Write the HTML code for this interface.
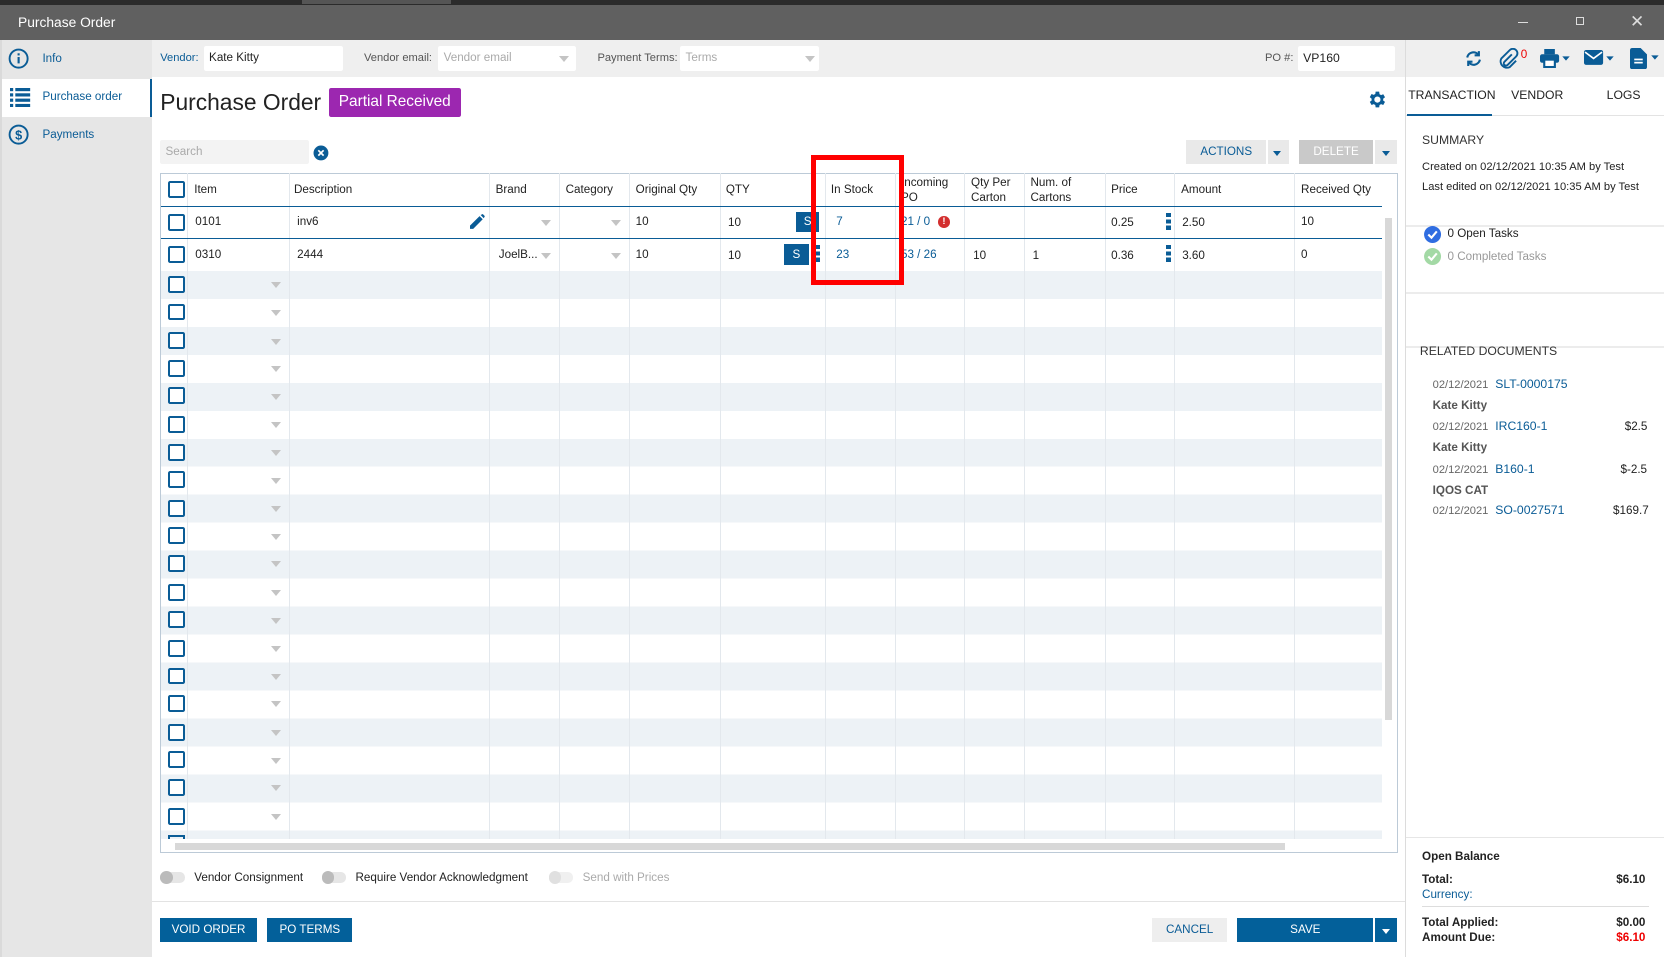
<!DOCTYPE html>
<html><head><meta charset="utf-8"><style>
*{box-sizing:border-box;margin:0;padding:0}
html,body{width:1664px;height:957px;overflow:hidden;background:#fff}
#z{zoom:1.06122;width:1568px;height:902px;position:relative;font-family:"Liberation Sans",sans-serif;font-size:11px;color:#222}
.a{position:absolute}
.t{position:absolute;white-space:nowrap}
.blue{color:#0a5c96}
.inp{position:absolute;background:#fff;height:24px;border-radius:2px;padding:5px 5px;font-size:11px}
.cb{position:absolute;left:158px;width:16px;height:16px;border:2px solid #0a5c96;border-radius:2px;background:#fff}
.dd{position:absolute;width:0;height:0;border-left:5px solid transparent;border-right:5px solid transparent;border-top:6px solid #c4c4c4}
.btn{position:absolute;background:#03609a;color:#fff;text-align:center;font-size:11px;line-height:23px;height:23px}
.vl{position:absolute;top:163px;height:628px;width:1px;background:#e3e8ed}
</style></head><body><div id="z">
<div class="a" style="left:0;top:0;width:1568px;height:5px;background:#2b2b2b"></div>
<div class="a" style="left:285px;top:0;width:140px;height:4px;background:#555"></div>
<div class="a" style="left:0;top:5px;width:1568px;height:33px;background:#606060"></div>
<div class="t" style="left:17px;top:14px;color:#fff;font-size:13px">Purchase Order</div>
<div class="a" style="left:1430px;top:21px;width:10px;height:1px;background:#ddd"></div>
<div class="a" style="left:1485px;top:16px;width:8px;height:8px;border:1px solid #ddd"></div>
<div class="t" style="left:1536px;top:11px;color:#ddd;font-size:16px">✕</div>
<div class="a" style="left:0;top:38px;width:143px;height:864px;background:#e6e6e6"></div>
<div class="a" style="left:0;top:38px;width:2px;height:864px;background:#dadada"></div>
<div class="a" style="left:2px;top:74px;width:141px;height:36px;background:#fff;border-right:2px solid #0a5c96"></div>
<svg class="a" style="left:8px;top:45px" width="20" height="20"><circle cx="10" cy="10" r="8.5" fill="none" stroke="#0a5c96" stroke-width="1.8"/><rect x="9" y="8.5" width="2" height="6" fill="#0a5c96"/><rect x="9" y="5" width="2" height="2" fill="#0a5c96"/></svg>
<div class="t blue" style="left:40px;top:49px">Info</div>
<svg class="a" style="left:9px;top:83px" width="20" height="18" fill="#0a5c96"><rect x="0" y="0" width="3" height="3"/><rect x="5" y="0" width="14" height="3"/><rect x="0" y="5" width="3" height="3"/><rect x="5" y="5" width="14" height="3"/><rect x="0" y="10" width="3" height="3"/><rect x="5" y="10" width="14" height="3"/><rect x="0" y="15" width="3" height="3"/><rect x="5" y="15" width="14" height="3"/></svg>
<div class="t blue" style="left:40px;top:85px">Purchase order</div>
<svg class="a" style="left:8px;top:117px" width="20" height="20"><circle cx="10" cy="10" r="8.5" fill="none" stroke="#0a5c96" stroke-width="1.8"/><text x="10" y="14.5" text-anchor="middle" font-size="12" font-weight="bold" fill="#0a5c96" font-family="Liberation Sans">$</text></svg>
<div class="t blue" style="left:40px;top:121px">Payments</div>
<div class="a" style="left:143px;top:38px;width:1425px;height:35px;background:#efefef"></div>
<div class="a" style="left:1324px;top:38px;width:1px;height:864px;background:#dcdcdc"></div>
<div class="t blue" style="left:151px;top:49px;font-size:10.5px">Vendor:</div>
<div class="inp" style="left:192px;top:43px;width:131px">Kate Kitty</div>
<div class="t" style="left:343px;top:49px;font-size:10.5px;color:#555">Vendor email:</div>
<div class="inp" style="left:413px;top:43px;width:130px;color:#aaa">Vendor email</div>
<div class="dd" style="left:527px;top:53px"></div>
<div class="t" style="left:563px;top:49px;font-size:10.5px;color:#555">Payment Terms:</div>
<div class="inp" style="left:641px;top:43px;width:131px;color:#aaa">Terms</div>
<div class="dd" style="left:759px;top:53px"></div>
<div class="t" style="left:1192px;top:49px;font-size:10.5px;color:#555">PO #:</div>
<div class="inp" style="left:1223px;top:43px;width:92px;font-size:11.5px">VP160</div>
<svg class="a" style="left:1380px;top:46px" width="18" height="18" fill="none" stroke="#0a5c96" stroke-width="2"><path d="M3 8a6 6 0 0 1 11-2"/><path d="M15 10a6 6 0 0 1-11 2"/><path d="M14 2v4h-4" /><path d="M4 16v-4h4"/></svg>
<svg class="a" style="left:1411px;top:45px" width="20" height="20" fill="none" stroke="#0a5c96" stroke-width="1.8"><path d="M14 6l-7 7a2 2 0 0 0 3 3l8-8a4 4 0 0 0-6-6l-8 8a6 6 0 0 0 8 8l6-6"/></svg>
<div class="t" style="left:1433px;top:45px;color:#e00;font-size:11px">0</div>
<svg class="a" style="left:1451px;top:46px" width="30" height="18" fill="#0a5c96"><rect x="4" y="0" width="10" height="5"/><rect x="0" y="5" width="18" height="8" rx="2"/><rect x="4" y="10" width="10" height="7" fill="#fff" stroke="#0a5c96" stroke-width="2"/><path d="M21 7h7l-3.5 4z"/></svg>
<svg class="a" style="left:1493px;top:47px" width="30" height="16" fill="#0a5c96"><rect x="0" y="0" width="18" height="14" rx="2"/><path d="M1 2l8 6 8-6" stroke="#fff" stroke-width="1.6" fill="none"/><path d="M21 6h7l-3.5 4z"/></svg>
<svg class="a" style="left:1536px;top:45px" width="30" height="20" fill="#0a5c96"><path d="M0 2a2 2 0 0 1 2-2h8l6 6v12a2 2 0 0 1-2 2H2a2 2 0 0 1-2-2z"/><rect x="4" y="10" width="8" height="1.6" fill="#fff"/><rect x="4" y="13" width="8" height="1.6" fill="#fff"/><path d="M20 7h7l-3.5 4z"/></svg>
<div class="t" style="left:1327px;top:83px;font-size:11.5px">TRANSACTION</div>
<div class="t" style="left:1424px;top:83px;font-size:11.5px">VENDOR</div>
<div class="t" style="left:1514px;top:83px;font-size:11.5px">LOGS</div>
<div class="a" style="left:1325px;top:108px;width:243px;height:1px;background:#e3e3e3"></div>
<div class="a" style="left:1326px;top:107px;width:80px;height:2px;background:#0a5c96"></div>
<div class="t" style="left:1340px;top:125px;font-size:11.5px;color:#333">SUMMARY</div>
<div class="t" style="left:1340px;top:152px;font-size:10.5px">Created on 02/12/2021 10:35 AM by Test</div>
<div class="t" style="left:1340px;top:171px;font-size:10.5px">Last edited on 02/12/2021 10:35 AM by Test</div>
<div class="a" style="left:1325px;top:212px;width:243px;height:2px;background:#ececec"></div>
<svg class="a" style="left:1341px;top:212px" width="18" height="18"><circle cx="9" cy="9" r="8" fill="#2f6de1"/><path d="M5 9l3 3 5-6" stroke="#fff" stroke-width="2" fill="none"/></svg>
<div class="t" style="left:1364px;top:214px;font-size:11px">0 Open Tasks</div>
<svg class="a" style="left:1341px;top:233px" width="18" height="18"><circle cx="9" cy="9" r="8" fill="#a3d9a5"/><path d="M5 9l3 3 5-6" stroke="#fff" stroke-width="2" fill="none"/></svg>
<div class="t" style="left:1364px;top:236px;font-size:11px;color:#999">0 Completed Tasks</div>
<div class="a" style="left:1325px;top:275px;width:243px;height:2px;background:#ececec"></div>
<div class="a" style="left:1325px;top:326px;width:243px;height:2px;background:#ececec"></div>
<div class="t" style="left:1338px;top:324px;font-size:11.5px;color:#333">RELATED DOCUMENTS</div>
<div class="t" style="left:1350px;top:357px;font-size:10.5px;color:#666">02/12/2021</div><div class="t blue" style="left:1409px;top:355px;font-size:11.5px">SLT-0000175</div>
<div class="t" style="left:1350px;top:376px;font-weight:bold;color:#555">Kate Kitty</div>
<div class="t" style="left:1350px;top:397px;font-size:10.5px;color:#666">02/12/2021</div><div class="t blue" style="left:1409px;top:395px;font-size:11.5px">IRC160-1</div><div class="t" style="left:1531px;top:396px">$2.5</div>
<div class="t" style="left:1350px;top:416px;font-weight:bold;color:#555">Kate Kitty</div>
<div class="t" style="left:1350px;top:437px;font-size:10.5px;color:#666">02/12/2021</div><div class="t blue" style="left:1409px;top:435px;font-size:11.5px">B160-1</div><div class="t" style="left:1527px;top:436px">$-2.5</div>
<div class="t" style="left:1350px;top:456px;font-weight:bold;color:#555">IQOS CAT</div>
<div class="t" style="left:1350px;top:476px;font-size:10.5px;color:#666">02/12/2021</div><div class="t blue" style="left:1409px;top:474px;font-size:11.5px">SO-0027571</div><div class="t" style="left:1520px;top:475px">$169.7</div>
<div class="a" style="left:1325px;top:789px;width:243px;height:1px;background:#e6e6e6"></div>
<div class="t" style="left:1340px;top:801px;font-weight:bold;font-size:11px">Open Balance</div>
<div class="t" style="left:1340px;top:823px;font-weight:bold">Total:</div><div class="t" style="left:1523px;top:823px;font-weight:bold">$6.10</div>
<div class="t blue" style="left:1340px;top:837px">Currency:</div>
<div class="a" style="left:1340px;top:854px;width:214px;height:1px;background:#ddd"></div>
<div class="t" style="left:1340px;top:863px;font-weight:bold">Total Applied:</div><div class="t" style="left:1523px;top:863px;font-weight:bold">$0.00</div>
<div class="t" style="left:1340px;top:877px;font-weight:bold">Amount Due:</div><div class="t" style="left:1523px;top:877px;font-weight:bold;color:#e00">$6.10</div>
<div class="t" style="left:151px;top:84px;font-size:21.5px;color:#222">Purchase Order</div>
<div class="a" style="left:310px;top:83px;width:124px;height:27px;background:#9c27b0;border-radius:2px;color:#fff;font-size:14.5px;line-height:27px;text-align:center">Partial Received</div>
<svg class="a" style="left:1287px;top:84px" width="20" height="20" viewBox="0 0 24 24" fill="#0a5c96"><path d="M19.4 13a7.5 7.5 0 0 0 0-2l2.1-1.6-2-3.5-2.5 1a7.6 7.6 0 0 0-1.7-1L14.9 3h-4l-.4 2.7a7.6 7.6 0 0 0-1.7 1l-2.5-1-2 3.5L6.4 11a7.5 7.5 0 0 0 0 2l-2.1 1.6 2 3.5 2.5-1a7.6 7.6 0 0 0 1.7 1l.4 2.7h4l.4-2.7a7.6 7.6 0 0 0 1.7-1l2.5 1 2-3.5zM12.9 15.5a3.5 3.5 0 1 1 0-7 3.5 3.5 0 0 1 0 7z"/></svg>
<div class="a" style="left:151px;top:132px;width:140px;height:23px;background:#f3f3f3;border-radius:2px;color:#aaa;padding:5px;font-size:11px">Search</div>
<svg class="a" style="left:295px;top:137px" width="15" height="15"><circle cx="7.5" cy="7.5" r="7" fill="#0a5c96"/><path d="M5 5l5 5M10 5l-5 5" stroke="#fff" stroke-width="1.6"/></svg>
<div class="a" style="left:1118px;top:132px;width:75px;height:23px;background:#e9e9e9;color:#0a5c96;text-align:center;line-height:23px">ACTIONS</div>
<div class="a" style="left:1195px;top:132px;width:20px;height:23px;background:#e9e9e9"></div><div class="dd" style="left:1200px;top:142px;border-top-color:#0a5c96;border-width:5px 4px 0 4px"></div>
<div class="a" style="left:1224px;top:132px;width:70px;height:23px;background:#c9c9c9;color:#fff;text-align:center;line-height:23px">DELETE</div>
<div class="a" style="left:1296px;top:132px;width:20px;height:23px;background:#e9e9e9"></div><div class="dd" style="left:1302px;top:142px;border-top-color:#0a5c96;border-width:5px 4px 0 4px"></div>
<div class="a" style="left:151px;top:163px;width:1166px;height:641px;border:1px solid #bccad7;background:#fff"></div>
<div class="a" style="left:152px;top:255px;width:1150px;height:536px;background:repeating-linear-gradient(#edf2f6 0 26.35px,#fff 26.35px 52.7px)"></div>
<div class="vl" style="left:176px"></div><div class="vl" style="left:272px"></div><div class="vl" style="left:461px"></div><div class="vl" style="left:527px"></div><div class="vl" style="left:593px"></div><div class="vl" style="left:678px"></div><div class="vl" style="left:777px"></div><div class="vl" style="left:843px"></div><div class="vl" style="left:908px"></div><div class="vl" style="left:965px"></div><div class="vl" style="left:1041px"></div><div class="vl" style="left:1106px"></div><div class="vl" style="left:1219px"></div>
<div class="a" style="left:152px;top:194px;width:1150px;height:1px;background:#0a5c96"></div>
<div class="a" style="left:152px;top:224px;width:1150px;height:1px;background:#0a5c96"></div>
<div class="a" style="left:1302px;top:164px;width:14px;height:626px;background:#fff"></div>
<div class="a" style="left:1305px;top:205px;width:7px;height:473px;background:#d8d8d8"></div>
<div class="a" style="left:165px;top:794px;width:1046px;height:7px;background:#d8d8d8"></div>
<div class="cb" style="top:171px"></div>
<div class="t" style="left:183px;top:172px">Item</div><div class="t" style="left:277px;top:172px">Description</div><div class="t" style="left:467px;top:172px">Brand</div><div class="t" style="left:533px;top:172px">Category</div><div class="t" style="left:599px;top:172px">Original Qty</div><div class="t" style="left:684px;top:172px">QTY</div><div class="t" style="left:783px;top:172px">In Stock</div><div class="t" style="left:849px;top:166px;line-height:14px">Incoming<br>PO</div><div class="t" style="left:915px;top:166px;line-height:14px">Qty Per<br>Carton</div><div class="t" style="left:971px;top:166px;line-height:14px">Num. of<br>Cartons</div><div class="t" style="left:1047px;top:172px">Price</div><div class="t" style="left:1113px;top:172px">Amount</div><div class="t" style="left:1226px;top:172px">Received Qty</div>
<div class="cb" style="top:202px"></div>
<div class="t" style="left:184px;top:203px">0101</div><div class="t" style="left:280px;top:203px">inv6</div>
<svg class="a" style="left:443px;top:202px" width="14" height="14" fill="#0a5c96"><path d="M0 14v-3l9-9 3 3-9 9zM10 1l2-1 2 2-1 2z"/></svg>
<div class="dd" style="left:510px;top:207px"></div><div class="dd" style="left:576px;top:207px"></div>
<div class="t" style="left:599px;top:203px">10</div><div class="t" style="left:686px;top:204px">10</div>
<div class="a" style="left:750px;top:200px;width:22px;height:19px;background:#0a5c96;color:#fff;text-align:center;line-height:19px">S</div>
<div class="t blue" style="left:788px;top:203px">7</div><div class="t blue" style="left:849px;top:203px">21 / 0</div>
<div class="a" style="left:884px;top:204px;width:11px;height:11px;border-radius:50%;background:#d32f2f;color:#fff;font-size:9px;font-weight:bold;text-align:center;line-height:11px">!</div>
<div class="t" style="left:1047px;top:204px">0.25</div><div class="t" style="left:1114px;top:204px">2.50</div><div class="t" style="left:1226px;top:203px">10</div>
<div class="a" style="left:1099px;top:201px;width:4px;height:16px;background:repeating-linear-gradient(#0a5c96 0 4px,transparent 4px 6px)"></div>
<div class="cb" style="top:232px"></div>
<div class="t" style="left:184px;top:234px">0310</div><div class="t" style="left:280px;top:234px">2444</div><div class="t" style="left:470px;top:234px">JoelB...</div>
<div class="dd" style="left:510px;top:238px"></div><div class="dd" style="left:576px;top:238px"></div>
<div class="t" style="left:599px;top:234px">10</div><div class="t" style="left:686px;top:235px">10</div>
<div class="a" style="left:739px;top:230px;width:23px;height:20px;background:#0a5c96;color:#fff;text-align:center;line-height:20px">S</div>
<div class="a" style="left:769px;top:231px;width:4px;height:16px;background:repeating-linear-gradient(#0a5c96 0 4px,transparent 4px 6px)"></div>
<div class="t blue" style="left:788px;top:234px">23</div><div class="t blue" style="left:849px;top:234px">53 / 26</div><div class="t" style="left:917px;top:235px">10</div><div class="t" style="left:973px;top:235px">1</div>
<div class="t" style="left:1047px;top:235px">0.36</div><div class="t" style="left:1114px;top:235px">3.60</div><div class="t" style="left:1226px;top:234px">0</div>
<div class="a" style="left:1099px;top:231px;width:4px;height:16px;background:repeating-linear-gradient(#0a5c96 0 4px,transparent 4px 6px)"></div>
<div class="cb" style="top:260px"></div><div class="dd" style="left:255px;top:266px"></div>
<div class="cb" style="top:286px"></div><div class="dd" style="left:255px;top:292px"></div>
<div class="cb" style="top:313px"></div><div class="dd" style="left:255px;top:319px"></div>
<div class="cb" style="top:339px"></div><div class="dd" style="left:255px;top:345px"></div>
<div class="cb" style="top:365px"></div><div class="dd" style="left:255px;top:371px"></div>
<div class="cb" style="top:392px"></div><div class="dd" style="left:255px;top:398px"></div>
<div class="cb" style="top:418px"></div><div class="dd" style="left:255px;top:424px"></div>
<div class="cb" style="top:444px"></div><div class="dd" style="left:255px;top:450px"></div>
<div class="cb" style="top:471px"></div><div class="dd" style="left:255px;top:477px"></div>
<div class="cb" style="top:497px"></div><div class="dd" style="left:255px;top:503px"></div>
<div class="cb" style="top:523px"></div><div class="dd" style="left:255px;top:529px"></div>
<div class="cb" style="top:550px"></div><div class="dd" style="left:255px;top:556px"></div>
<div class="cb" style="top:576px"></div><div class="dd" style="left:255px;top:582px"></div>
<div class="cb" style="top:603px"></div><div class="dd" style="left:255px;top:609px"></div>
<div class="cb" style="top:629px"></div><div class="dd" style="left:255px;top:635px"></div>
<div class="cb" style="top:655px"></div><div class="dd" style="left:255px;top:661px"></div>
<div class="cb" style="top:682px"></div><div class="dd" style="left:255px;top:688px"></div>
<div class="cb" style="top:708px"></div><div class="dd" style="left:255px;top:714px"></div>
<div class="cb" style="top:734px"></div><div class="dd" style="left:255px;top:740px"></div>
<div class="cb" style="top:761px"></div><div class="dd" style="left:255px;top:767px"></div>
<div class="a" style="left:158px;top:787px;width:16px;height:4px;border:2px solid #0a5c96;border-bottom:0"></div>
<div class="a" style="left:764px;top:146px;width:88px;height:123px;border:5px solid #f00"></div>
<div class="a" style="left:151px;top:822px;width:23px;height:10px;border-radius:5px;background:#e6e6e6"></div><div class="a" style="left:151px;top:821px;width:12px;height:12px;border-radius:50%;background:#bbb"></div>
<div class="t" style="left:183px;top:821px">Vendor Consignment</div>
<div class="a" style="left:303px;top:822px;width:23px;height:10px;border-radius:5px;background:#e6e6e6"></div><div class="a" style="left:303px;top:821px;width:12px;height:12px;border-radius:50%;background:#bbb"></div>
<div class="t" style="left:335px;top:821px">Require Vendor Acknowledgment</div>
<div class="a" style="left:517px;top:822px;width:23px;height:10px;border-radius:5px;background:#f0f0f0"></div><div class="a" style="left:517px;top:821px;width:12px;height:12px;border-radius:50%;background:#e0e0e0"></div>
<div class="t" style="left:549px;top:821px;color:#aaa">Send with Prices</div>
<div class="a" style="left:143px;top:849px;width:1181px;height:1px;background:#e3e3e3"></div>
<div class="btn" style="left:151px;top:865px;width:91px">VOID ORDER</div>
<div class="btn" style="left:252px;top:865px;width:80px">PO TERMS</div>
<div class="a" style="left:1086px;top:865px;width:70px;height:23px;background:#eee;color:#0a5c96;text-align:center;line-height:23px">CANCEL</div>
<div class="btn" style="left:1166px;top:865px;width:128px">SAVE</div>
<div class="btn" style="left:1296px;top:865px;width:20px"></div><div class="dd" style="left:1302px;top:875px;border-top-color:#fff;border-width:5px 4px 0 4px"></div>
</div></body></html>
